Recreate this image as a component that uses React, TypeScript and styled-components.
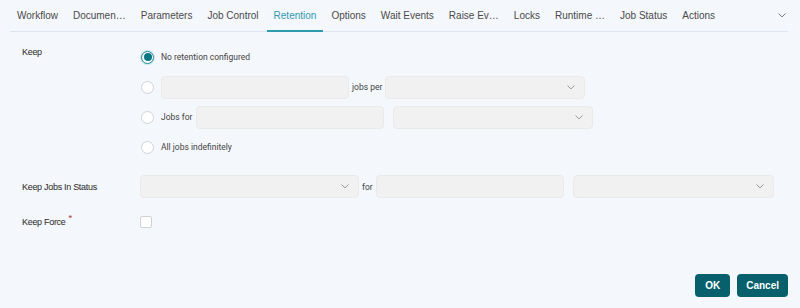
import React from "react";
import styled, { createGlobalStyle } from "styled-components";

const Global = createGlobalStyle`
  html, body { margin: 0; padding: 0; background: #f4f7fb; }
  body { font-family: "Liberation Sans", Arial, sans-serif; }
  * { box-sizing: border-box; }
`;

const teal = "#2e9aae";
const dark = "#07606c";

const Page = styled.div`
  width: 800px;
  height: 308px;
  display: flex;
  flex-direction: column;
  padding: 0 12px 0 10px;
  background: #f4f7fb;
  overflow: hidden;
`;

const TabBar = styled.div`
  display: flex;
  align-items: stretch;
  height: 32px;
  border-bottom: 1px solid #dde5ef;
`;

const Tab = styled.div<{ $active?: boolean }>`
  display: flex;
  align-items: center;
  padding: 0 7px;
  margin-right: 1px;
  font-size: 10px;
  white-space: nowrap;
  color: ${(p) => (p.$active ? teal : "#4a4a4a")};
  border-bottom: 2px solid ${(p) => (p.$active ? teal : "transparent")};
  margin-bottom: -1px;
`;

const TabSpacer = styled.div`
  flex: 1;
`;

const TabMore = styled.div`
  display: flex;
  align-items: center;
  padding-right: 2px;
  color: #777;
`;

const Form = styled.div`
  padding: 14px 0 0 12px;
  display: flex;
  flex-direction: column;
`;

const FieldRow = styled.div<{ $mb?: number; $align?: string }>`
  display: grid;
  grid-template-columns: 118px 1fr;
  align-items: ${(p) => p.$align || "center"};
  margin-bottom: ${(p) => p.$mb ?? 0}px;
`;

const Label = styled.div`
  font-size: 9px;
  line-height: 12px;
  letter-spacing: -0.3px;
  color: #333;
  -webkit-text-stroke: 0.05px #333;
`;

const Req = styled.span`
  color: #d23a3a;
  font-size: 9px;
  position: relative;
  top: -4px;
  margin-left: 3px;
`;

const RadioGroup = styled.div`
  display: flex;
  flex-direction: column;
  gap: 8px;
`;

const Option = styled.div`
  display: flex;
  align-items: center;
  height: 22px;
  padding-left: 1px;
`;

const Radio = styled.span<{ $checked?: boolean }>`
  width: 13px;
  height: 13px;
  border-radius: 50%;
  flex: none;
  background: #fff;
  border: 1px solid ${(p) => (p.$checked ? "#1b8a9a" : "#cfd3d8")};
  box-shadow: ${(p) => (p.$checked ? "0 0 0 1px rgba(46,154,174,0.18)" : "none")};
  margin-right: 7px;
  display: flex;
  align-items: center;
  justify-content: center;
  &::after {
    content: "";
    display: ${(p) => (p.$checked ? "block" : "none")};
    width: 8px;
    height: 8px;
    border-radius: 50%;
    background: #0b7784;
  }
`;

const OptText = styled.span<{ $mr?: number }>`
  font-family: Roboto, "Liberation Sans", sans-serif;
  font-size: 8.5px;
  color: #444;
  white-space: nowrap;
  margin-right: ${(p) => p.$mr ?? 0}px;
`;

const Inline = styled.span`
  font-family: Roboto, "Liberation Sans", sans-serif;
  font-size: 8.5px;
  color: #444;
  margin: 0 3px;
  white-space: nowrap;
`;

const Input = styled.div<{ $w: number }>`
  width: ${(p) => p.$w}px;
  height: 23px;
  flex: none;
  background: #f1f1f1;
  border: 1px solid #eaeaea;
  border-radius: 4px;
`;

const SelectBox = styled.div<{ $w: number; $ml?: number }>`
  width: ${(p) => p.$w}px;
  height: 23px;
  flex: none;
  margin-left: ${(p) => p.$ml ?? 0}px;
  background: #f1f1f1;
  border: 1px solid #eaeaea;
  border-radius: 4px;
  display: flex;
  align-items: center;
  justify-content: flex-end;
  padding-right: 9px;
`;

const Controls = styled.div`
  display: flex;
  align-items: center;
`;

const Checkbox = styled.span`
  width: 12px;
  height: 12px;
  background: #fff;
  border: 1px solid #cfd3d8;
  border-radius: 2px;
  display: block;
`;

const ForceRow = styled.div`
  height: 23px;
  display: flex;
  align-items: center;
`;

const Footer = styled.div`
  margin-top: auto;
  display: flex;
  justify-content: flex-end;
  gap: 7px;
  padding-bottom: 11px;
`;

const Button = styled.button<{ $px?: number }>`
  height: 23px;
  padding: 0 ${(p) => p.$px ?? 10}px;
  background: ${dark};
  color: #fff;
  border: none;
  border-radius: 4px;
  font-family: "Liberation Sans", Arial, sans-serif;
  font-weight: bold;
  font-size: 10px;
`;

const Chevron = ({ size = 8, color = "#9a9a9a" }: { size?: number; color?: string }) => (
  <svg width={size} height={size / 2 + 1} viewBox="0 0 8 5" fill="none">
    <path d="M0.8 0.8 L4 3.9 L7.2 0.8" stroke={color} strokeWidth="1" strokeLinecap="round" strokeLinejoin="round" />
  </svg>
);

const Select = ({ w, ml }: { w: number; ml?: number }) => (
  <SelectBox $w={w} $ml={ml}>
    <Chevron />
  </SelectBox>
);

const tabs = [
  "Workflow",
  "Documen…",
  "Parameters",
  "Job Control",
  "Retention",
  "Options",
  "Wait Events",
  "Raise Ev…",
  "Locks",
  "Runtime …",
  "Job Status",
  "Actions",
];

export default function App() {
  return (
    <>
      <Global />
      <Page>
        <TabBar>
          {tabs.map((t) => (
            <Tab key={t} $active={t === "Retention"}>
              {t}
            </Tab>
          ))}
          <TabSpacer />
          <TabMore>
            <Chevron size={8} color="#777" />
          </TabMore>
        </TabBar>
        <Form>
          <FieldRow $align="start" $mb={17}>
            <Label>Keep</Label>
            <RadioGroup>
              <Option>
                <Radio $checked />
                <OptText>No retention configured</OptText>
              </Option>
              <Option>
                <Radio />
                <Input $w={188} />
                <Inline>jobs per</Inline>
                <Select w={200} />
              </Option>
              <Option>
                <Radio />
                <OptText $mr={3}>Jobs for</OptText>
                <Input $w={188} />
                <Select w={200} ml={9} />
              </Option>
              <Option>
                <Radio />
                <OptText>All jobs indefinitely</OptText>
              </Option>
            </RadioGroup>
          </FieldRow>
          <FieldRow $mb={12}>
            <Label>Keep Jobs In Status</Label>
            <Controls>
              <Select w={219} />
              <Inline>for</Inline>
              <Input $w={188} />
              <Select w={201} ml={9} />
            </Controls>
          </FieldRow>
          <FieldRow>
            <Label>
              Keep Force<Req>*</Req>
            </Label>
            <ForceRow>
              <Checkbox />
            </ForceRow>
          </FieldRow>
        </Form>
        <Footer>
          <Button $px={10}>OK</Button>
          <Button $px={9}>Cancel</Button>
        </Footer>
      </Page>
    </>
  );
}
